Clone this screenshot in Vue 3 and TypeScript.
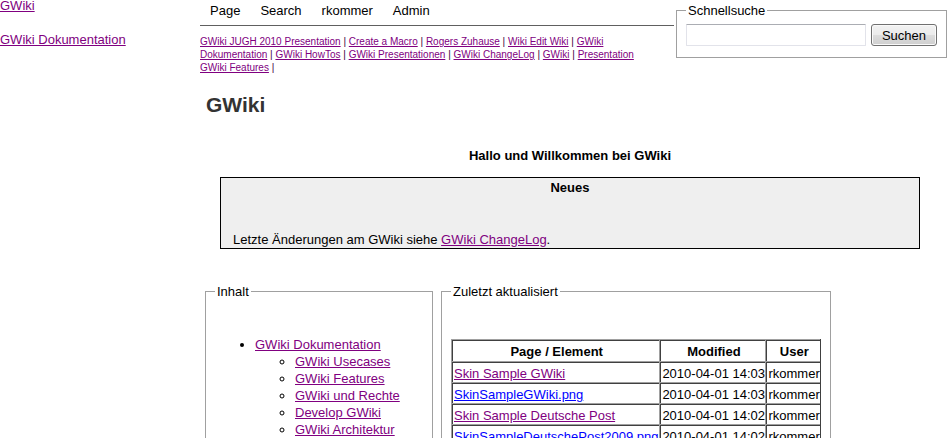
<script setup lang="ts">
import { ref } from 'vue'

interface Change {
  page: string
  modified: string
  user: string
  visited: boolean
}

const query = ref('')
const sidebar: string[] = ['GWiki', 'GWiki Dokumentation']
const menu: string[] = ['Page', 'Search', 'rkommer', 'Admin']
const trail: string[] = [
  'GWiki JUGH 2010 Presentation',
  'Create a Macro',
  'Rogers Zuhause',
  'Wiki Edit Wiki',
  'GWiki Dokumentation',
  'GWiki HowTos',
  'GWiki Presentationen',
  'GWiki ChangeLog',
  'GWiki',
  'Presentation GWiki Features',
]
const chapters: string[] = [
  'GWiki Usecases',
  'GWiki Features',
  'GWiki und Rechte',
  'Develop GWiki',
  'GWiki Architektur',
]
const changes: Change[] = [
  { page: 'Skin Sample GWiki', modified: '2010-04-01 14:03', user: 'rkommer', visited: true },
  { page: 'SkinSampleGWiki.png', modified: '2010-04-01 14:03', user: 'rkommer', visited: false },
  { page: 'Skin Sample Deutsche Post', modified: '2010-04-01 14:02', user: 'rkommer', visited: true },
  { page: 'SkinSampleDeutschePost2009.png', modified: '2010-04-01 14:02', user: 'rkommer', visited: false },
]
</script>

<template>
  <div class="page">
    <nav class="sidebar">
      <a v-for="item in sidebar" :key="item" href="#">{{ item }}</a>
    </nav>

    <div class="main">
      <header class="top">
        <div class="head">
          <nav class="menu">
            <a v-for="item in menu" :key="item" href="#">{{ item }}</a>
          </nav>
          <nav class="trail">
            <template v-for="item in trail" :key="item"><a href="#">{{ item }}</a> <span>|</span> {{ '' }}</template>
          </nav>
        </div>
        <form class="search" @submit.prevent>
          <fieldset class="group">
            <legend>Schnellsuche</legend>
            <div class="search-row">
              <input v-model="query" type="text" aria-label="Schnellsuche" />
              <button type="submit">Suchen</button>
            </div>
          </fieldset>
        </form>
      </header>

      <h1>GWiki</h1>

      <main class="content">
        <h2>Hallo und Willkommen bei GWiki</h2>
        <section class="news">
          <h3>Neues</h3>
          <p>Letzte Änderungen am GWiki siehe <a href="#">GWiki ChangeLog</a>.</p>
        </section>
      </main>

      <div class="panels">
        <fieldset class="group contents">
          <legend>Inhalt</legend>
          <ul>
            <li>
              <a href="#">GWiki Dokumentation</a>
              <ul>
                <li v-for="item in chapters" :key="item"><a href="#">{{ item }}</a></li>
              </ul>
            </li>
          </ul>
        </fieldset>
        <fieldset class="group recent">
          <legend>Zuletzt aktualisiert</legend>
          <table>
            <thead>
              <tr>
                <th>Page / Element</th>
                <th>Modified</th>
                <th>User</th>
              </tr>
            </thead>
            <tbody>
              <tr v-for="row in changes" :key="row.page">
                <td><a href="#" :class="{ fresh: !row.visited }">{{ row.page }}</a></td>
                <td>{{ row.modified }}</td>
                <td>{{ row.user }}</td>
              </tr>
            </tbody>
          </table>
        </fieldset>
      </div>
    </div>
  </div>
</template>

<style>
body {
  background: #fff;
}
</style>

<style scoped>
.page {
  display: flex;
  height: 100vh;
  overflow: hidden;
  font: 13px/17px "Liberation Sans", Arial, sans-serif;
  color: #000;
}
a {
  color: #800080;
}
a.fresh {
  color: #0000ff;
}
h1,
h2,
h3,
p,
ul {
  margin: 0;
}
.sidebar {
  flex: 0 0 200px;
  display: flex;
  flex-direction: column;
  align-items: flex-start;
  gap: 17px;
  margin-top: -3px;
}
.main {
  flex: 1;
  min-width: 0;
}
.top {
  display: flex;
  gap: 2px;
  height: 88px;
}
.head {
  flex: 1;
  min-width: 0;
}
.menu {
  display: flex;
  gap: 20px;
  padding: 2px 10px 6px;
  border-bottom: 1px solid #606060;
}
.menu a {
  color: #000;
  text-decoration: none;
}
.trail {
  padding: 9px 16px 0 0;
  font-size: 10px;
  line-height: 13px;
}
.trail span {
  color: #400040;
}
.search {
  flex: 0 0 271px;
  min-width: 0;
  margin-right: 1px;
}
.group {
  min-width: 0;
  margin: 0;
  border: 1px solid #a0a0a0;
  box-sizing: border-box;
}
legend {
  padding: 0 2px;
}
.search .group {
  padding: 5px 9px 11px;
  margin-top: 2px;
}
.search-row {
  display: flex;
  gap: 5px;
}
input {
  flex: 1;
  min-width: 0;
  height: 22px;
  box-sizing: border-box;
  border: 1px solid #e2e3ea;
  border-top-color: #abadb3;
  border-radius: 1px;
  font: inherit;
}
button {
  height: 22px;
  padding: 0 10px;
  border: 1px solid #707070;
  border-radius: 3px;
  background: linear-gradient(#f2f2f2, #ebebeb 50%, #dddddd 50%, #cfcfcf);
  box-shadow: inset 0 0 0 1px #fafafa;
  font: inherit;
  color: #000;
}
h1 {
  padding: 4px 6px;
  font-size: 21px;
  line-height: 26px;
  color: #333;
}
.content {
  padding: 25px 28px 0 20px;
}
h2,
h3 {
  font-size: 13px;
  line-height: 17px;
  text-align: center;
}
.news {
  margin-top: 13px;
  padding: 1px 12px 0;
  border: 1px solid #000;
  background: #efefef;
}
.news p {
  padding-top: 35px;
}
.panels {
  display: flex;
  align-items: flex-start;
  gap: 8px;
  margin: 34px 0 0 5px;
}
.group.contents {
  flex: 0 0 228px;
  padding: 36px 9px 40px;
}
.group.recent {
  flex: 0 0 390px;
  padding: 39px 9px 40px;
}
ul {
  padding-left: 40px;
}
table {
  width: 100%;
  border-spacing: 0;
  border-right: 1px solid #404040;
  border-bottom: 1px solid #404040;
}
th,
td {
  height: 17px;
  padding: 3px 0 0 2px;
  border-top: 1px solid #a0a0a0;
  border-left: 1px solid #a0a0a0;
  box-shadow: inset 1px 1px 0 #404040;
  white-space: nowrap;
}
th {
  padding: 3px 0 1px 2px;
}
</style>
